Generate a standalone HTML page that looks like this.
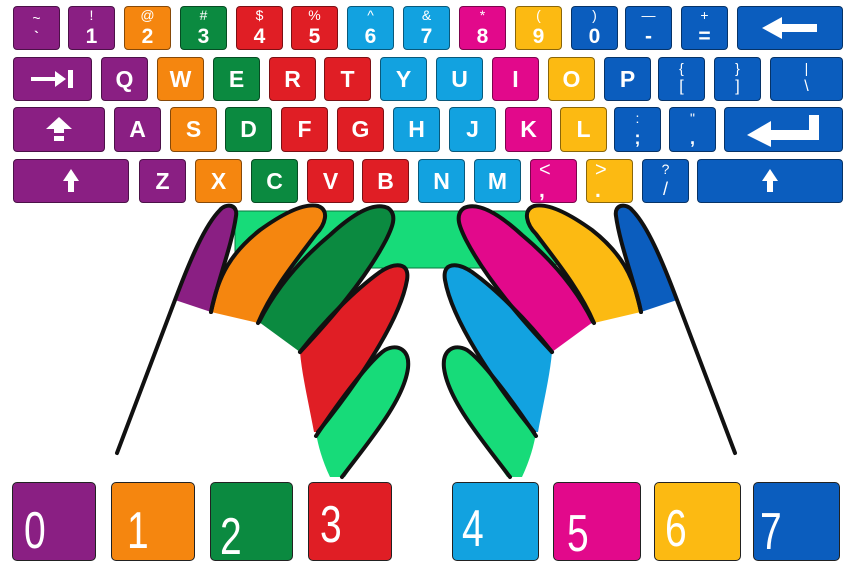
<!DOCTYPE html>
<html><head><meta charset="utf-8"><style>
body{margin:0;width:850px;height:575px;background:#fff;position:relative;overflow:hidden;font-family:"Liberation Sans",sans-serif}
.k{position:absolute;border-radius:4px;border:1px solid rgba(0,0,0,.45);box-sizing:border-box;color:#fff;display:flex;align-items:center;justify-content:center;font-weight:bold;font-size:23px}
.d{flex-direction:column;line-height:1}
.d .s{font-size:14px;font-weight:normal;margin-top:-2px}
.d .m{font-size:21px;margin-top:4px}
.n{position:absolute;border-radius:5px;border:1px solid #222;box-sizing:border-box;top:482px;height:79px}
.n span{position:absolute;color:#fff;font-size:52px;display:inline-block;transform:scaleX(.75);transform-origin:left top;line-height:1}
.P{background:#8A1F83}.O{background:#F5860F}.G{background:#0B8A40}.R{background:#E01E25}.L{background:#12A2E0}.K{background:#E2098B}.Y{background:#FCBA12}.B{background:#0B5DBE}
</style></head><body>
<!-- row1 -->
<div class="k d P" style="left:13px;top:6px;width:47px;height:44px"><span class="s">~</span><span class="m" style="font-size:14px">`</span></div>
<div class="k d P" style="left:68px;top:6px;width:47px;height:44px"><span class="s">!</span><span class="m">1</span></div>
<div class="k d O" style="left:124px;top:6px;width:47px;height:44px"><span class="s">@</span><span class="m">2</span></div>
<div class="k d G" style="left:180px;top:6px;width:47px;height:44px"><span class="s">#</span><span class="m">3</span></div>
<div class="k d R" style="left:236px;top:6px;width:47px;height:44px"><span class="s">$</span><span class="m">4</span></div>
<div class="k d R" style="left:291px;top:6px;width:47px;height:44px"><span class="s">%</span><span class="m">5</span></div>
<div class="k d L" style="left:347px;top:6px;width:47px;height:44px"><span class="s">^</span><span class="m">6</span></div>
<div class="k d L" style="left:403px;top:6px;width:47px;height:44px"><span class="s">&amp;</span><span class="m">7</span></div>
<div class="k d K" style="left:459px;top:6px;width:47px;height:44px"><span class="s">*</span><span class="m">8</span></div>
<div class="k d Y" style="left:515px;top:6px;width:47px;height:44px"><span class="s">(</span><span class="m">9</span></div>
<div class="k d B" style="left:571px;top:6px;width:47px;height:44px"><span class="s">)</span><span class="m">0</span></div>
<div class="k d B" style="left:625px;top:6px;width:47px;height:44px"><span class="s">—</span><span class="m">-</span></div>
<div class="k d B" style="left:681px;top:6px;width:47px;height:44px"><span class="s">+</span><span class="m">=</span></div>
<div class="k B" style="left:737px;top:6px;width:106px;height:44px"><svg width="56" height="24" viewBox="0 0 56 24"><path d="M0,12 L20,1 L20,8 L55,8 L55,16 L20,16 L20,23 Z" fill="#fff"/></svg></div>
<!-- row2 -->
<div class="k P" style="left:13px;top:57px;width:79px;height:44px"><svg width="44" height="20" viewBox="0 0 44 20"><path d="M0,8 L24,8 L24,2 L35,10 L24,18 L24,12 L0,12 Z M37,1 L42,1 L42,19 L37,19 Z" fill="#fff"/></svg></div>
<div class="k P" style="left:101px;top:57px;width:47px;height:44px">Q</div>
<div class="k O" style="left:157px;top:57px;width:47px;height:44px">W</div>
<div class="k G" style="left:213px;top:57px;width:47px;height:44px">E</div>
<div class="k R" style="left:269px;top:57px;width:47px;height:44px">R</div>
<div class="k R" style="left:324px;top:57px;width:47px;height:44px">T</div>
<div class="k L" style="left:380px;top:57px;width:47px;height:44px">Y</div>
<div class="k L" style="left:436px;top:57px;width:47px;height:44px">U</div>
<div class="k K" style="left:492px;top:57px;width:47px;height:44px">I</div>
<div class="k Y" style="left:548px;top:57px;width:47px;height:44px">O</div>
<div class="k B" style="left:604px;top:57px;width:47px;height:44px">P</div>
<div class="k d B" style="left:658px;top:57px;width:47px;height:44px"><span class="s">{</span><span class="m" style="font-size:16px;font-weight:normal">[</span></div>
<div class="k d B" style="left:714px;top:57px;width:47px;height:44px"><span class="s">}</span><span class="m" style="font-size:16px;font-weight:normal">]</span></div>
<div class="k d B" style="left:770px;top:57px;width:73px;height:44px"><span class="s">|</span><span class="m" style="font-size:16px;font-weight:normal">\</span></div>
<!-- row3 -->
<div class="k P" style="left:13px;top:107px;width:92px;height:45px"><svg width="28" height="26" viewBox="0 0 28 26"><path d="M14,0 L27,12 L19,12 L19,16 L9,16 L9,12 L1,12 Z M9,19 L19,19 L19,24 L9,24 Z" fill="#fff"/></svg></div>
<div class="k P" style="left:114px;top:107px;width:47px;height:45px">A</div>
<div class="k O" style="left:170px;top:107px;width:47px;height:45px">S</div>
<div class="k G" style="left:225px;top:107px;width:47px;height:45px">D</div>
<div class="k R" style="left:281px;top:107px;width:47px;height:45px">F</div>
<div class="k R" style="left:337px;top:107px;width:47px;height:45px">G</div>
<div class="k L" style="left:393px;top:107px;width:47px;height:45px">H</div>
<div class="k L" style="left:449px;top:107px;width:47px;height:45px">J</div>
<div class="k K" style="left:505px;top:107px;width:47px;height:45px">K</div>
<div class="k Y" style="left:560px;top:107px;width:47px;height:45px">L</div>
<div class="k d B" style="left:614px;top:107px;width:47px;height:45px"><span class="s">:</span><span class="m" style="font-size:18px">;</span></div>
<div class="k d B" style="left:669px;top:107px;width:47px;height:45px"><span class="s">"</span><span class="m" style="font-size:18px">,</span></div>
<div class="k B" style="left:724px;top:107px;width:119px;height:45px"><svg width="74" height="34" viewBox="0 0 74 34"><path d="M0,22 L24,8 L24,17 L62,17 L62,2 L72,2 L72,27 L24,27 L24,34 Z" fill="#fff"/></svg></div>
<!-- row4 -->
<div class="k P" style="left:13px;top:159px;width:116px;height:44px"><svg width="16" height="24" viewBox="0 0 16 24"><path d="M8,0 L16,12 L11,12 L11,23 L5,23 L5,12 L0,12 Z" fill="#fff"/></svg></div>
<div class="k P" style="left:139px;top:159px;width:47px;height:44px">Z</div>
<div class="k O" style="left:195px;top:159px;width:47px;height:44px">X</div>
<div class="k G" style="left:251px;top:159px;width:47px;height:44px">C</div>
<div class="k R" style="left:307px;top:159px;width:47px;height:44px">V</div>
<div class="k R" style="left:362px;top:159px;width:47px;height:44px">B</div>
<div class="k L" style="left:418px;top:159px;width:47px;height:44px">N</div>
<div class="k L" style="left:474px;top:159px;width:47px;height:44px">M</div>
<div class="k d K" style="left:530px;top:159px;width:47px;height:44px;align-items:flex-start;padding-left:8px"><span class="s" style="font-size:20px">&lt;</span><span class="m" style="margin-top:0">,</span></div>
<div class="k d Y" style="left:586px;top:159px;width:47px;height:44px;align-items:flex-start;padding-left:8px"><span class="s" style="font-size:20px">&gt;</span><span class="m" style="margin-top:0">.</span></div>
<div class="k d B" style="left:642px;top:159px;width:47px;height:44px"><span class="s">?</span><span class="m" style="font-size:18px;font-weight:normal">/</span></div>
<div class="k B" style="left:697px;top:159px;width:146px;height:44px"><svg width="16" height="24" viewBox="0 0 16 24"><path d="M8,0 L16,12 L11,12 L11,23 L5,23 L5,12 L0,12 Z" fill="#fff"/></svg></div>

<svg style="position:absolute;left:0;top:0" width="850" height="575" viewBox="0 0 850 575">
<defs>
<g id="hand">
<path d="M175,300 C190,260 205,225 220,210 C226,203 238,204 236,216 C232,245 218,280 211,312 Z" fill="var(--c1)"/>
<path d="M211,312 C218,275 232,252 260,230 C285,212 305,203 318,206 C330,210 325,225 316,234 C295,262 272,290 258,323 Z" fill="var(--c2)"/>
<path d="M259,322 C275,290 300,260 330,235 C355,212 375,202 388,208 C398,215 392,228 386,240 C365,280 330,320 300,352 Z" fill="var(--c3)"/>
<path d="M300,352 C325,320 355,290 380,272 C395,262 410,262 407,280 C400,320 360,380 318,432 L314,432 C308,400 302,375 300,352 Z" fill="var(--c4)"/>
<path d="M316,433 C340,400 370,360 385,350 C398,343 410,350 408,368 C404,400 370,440 345,477 L330,477 C322,460 318,445 316,433 Z" fill="#17DB79"/>
<g fill="none" stroke="#111" stroke-width="4" stroke-linecap="round" stroke-linejoin="round">
<path d="M117,453 L175,300 C190,260 205,225 220,210 C226,203 238,204 236,216 C232,245 218,280 211,312"/>
<path d="M211,312 C218,275 232,252 260,230 C285,212 305,203 318,206 C330,210 325,225 316,234 C295,262 272,290 258,323"/>
<path d="M259,322 C275,290 300,260 330,235 C355,212 375,202 388,208 C398,215 392,228 386,240 C365,280 330,320 300,352"/>
<path d="M300,352 C325,320 355,290 380,272 C395,262 410,262 407,280 C400,320 360,380 318,432"/>
<path d="M316,436 C340,400 370,360 385,350 C398,343 410,350 408,368 C404,400 370,440 342,477"/>
</g>
</g>
</defs>
<rect x="235" y="211" width="321" height="57" fill="#17DB79" stroke="#0a7a40" stroke-width="1"/>
<use href="#hand" style="--c1:#8A1F83;--c2:#F5860F;--c3:#0B8A40;--c4:#E01E25"/>
<use href="#hand" transform="translate(852,0) scale(-1,1)" style="--c1:#0B5DBE;--c2:#FCBA12;--c3:#E2098B;--c4:#12A2E0"/>
</svg>

<div class="n P" style="left:12px;width:84px"><span style="left:11px;top:22px">0</span></div>
<div class="n O" style="left:111px;width:84px"><span style="left:15px;top:22px">1</span></div>
<div class="n G" style="left:210px;width:83px"><span style="left:9px;top:28px">2</span></div>
<div class="n R" style="left:308px;width:84px"><span style="left:11px;top:16px">3</span></div>
<div class="n L" style="left:452px;width:87px"><span style="left:9px;top:20px">4</span></div>
<div class="n K" style="left:553px;width:88px"><span style="left:13px;top:25px">5</span></div>
<div class="n Y" style="left:654px;width:87px"><span style="left:10px;top:20px">6</span></div>
<div class="n B" style="left:753px;width:87px"><span style="left:6px;top:23px">7</span></div>
</body></html>
